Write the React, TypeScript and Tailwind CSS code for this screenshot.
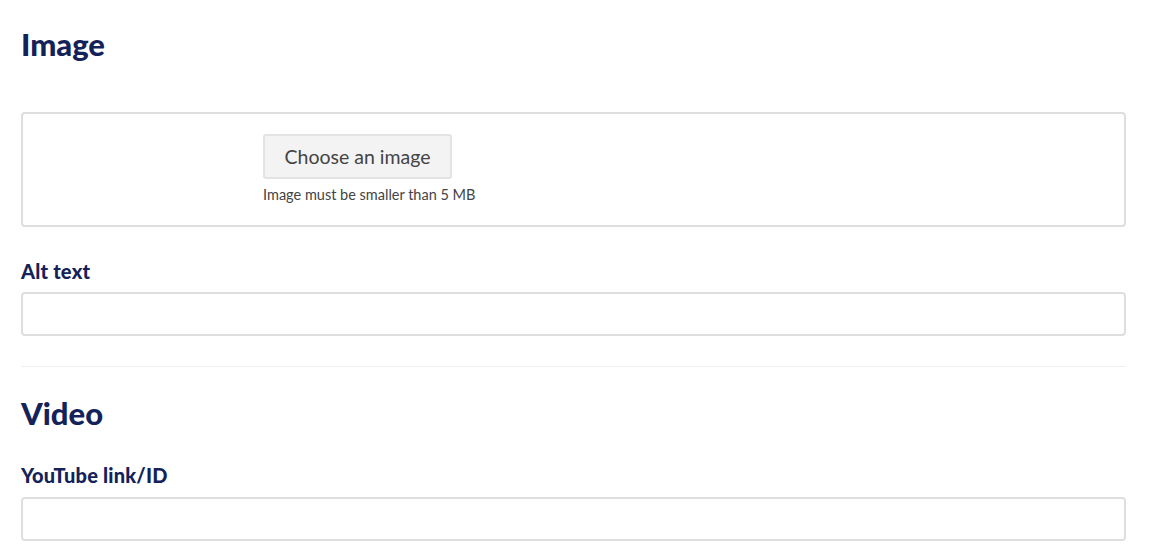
export default function App() {
    return (
        <div className="min-h-screen bg-white font-['Lato','Liberation_Sans',sans-serif]">
            <div className="pl-[21px] pr-[40px] pt-[26px]">
                {/* Image section */}
                <h2 className="text-[31px] leading-[37px] font-black text-[#14225a]">Image</h2>

                <div className="mt-[49px] h-[115px] rounded-[4px] border-2 border-[#dedede] pl-[240px] pt-[20px]">
                    <button
                        type="button"
                        className="h-[45px] w-[189px] rounded-[3px] border-2 border-[#e3e3e3] bg-[#f3f3f3] text-[19.5px] text-[#444]"
                    >
                        Choose an image
                    </button>
                    <p className="mt-[6px] text-[14.5px] leading-[20px] text-[#444]">Image must be smaller than 5 MB</p>
                </div>

                <label className="mt-[32px] block text-[20px] leading-[24px] font-black tracking-[0.2px] text-[#14225a]">Alt text</label>
                <input
                    type="text"
                    className="mt-[9px] block h-[44px] w-full rounded-[4px] border-2 border-[#dedede] px-3 outline-none"
                />

                <div className="mt-[30px] h-px bg-[#efefef]"></div>

                {/* Video section */}
                <h2 className="mt-[28px] text-[31px] leading-[37px] font-black text-[#14225a]">Video</h2>

                <label className="mt-[31px] block text-[20px] leading-[24px] font-black tracking-[0.2px] text-[#14225a]">YouTube link/ID</label>
                <input
                    type="text"
                    className="mt-[10px] block h-[44px] w-full rounded-[4px] border-2 border-[#dedede] px-3 outline-none"
                />
            </div>
        </div>
    );
}
